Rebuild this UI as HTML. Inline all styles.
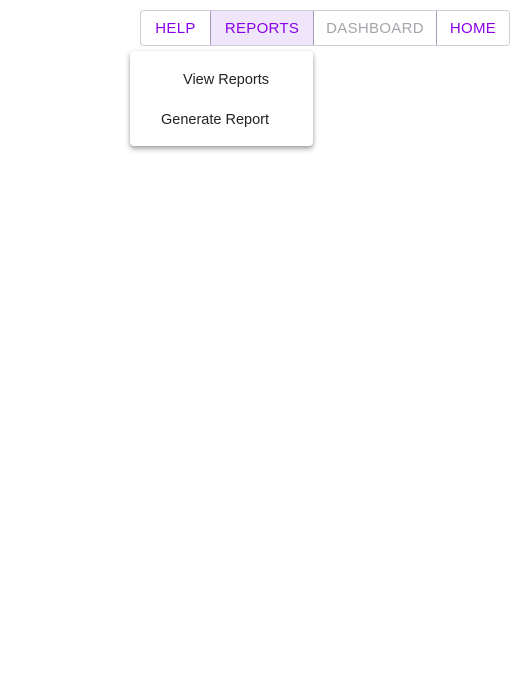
<!DOCTYPE html>
<html><head><style>
body{margin:0;width:520px;height:698px;background:#fff;font-family:"Liberation Sans",Arial,sans-serif;position:relative;overflow:hidden}
.grp{position:absolute;left:140px;top:10px;width:368px;height:34px;border:1px solid #d0cdd6;border-radius:4px;display:flex;overflow:hidden}
.b{height:34px;line-height:36px;text-align:center;font-size:15px;letter-spacing:0.3px;color:#8a00e6;box-sizing:border-box}
.b+.b{border-left:1px solid #a89bb5}
.menu{position:absolute;left:130px;top:51px;width:183px;height:95px;background:#fff;border-radius:4px;box-shadow:0 3px 6px rgba(0,0,0,.3),0 1px 3px rgba(0,0,0,.15)}
.it{position:absolute;right:44px;font-size:14.5px;color:#222}
</style></head><body>
<div class="grp">
<div class="b" style="width:69px">HELP</div>
<div class="b" style="width:103px;background:#efe6fb">REPORTS</div>
<div class="b" style="width:123px;color:#a8a3aa">DASHBOARD</div>
<div class="b" style="width:73px">HOME</div>
</div>
<div class="menu">
<div class="it" style="top:21px">View Reports</div>
<div class="it" style="top:61px">Generate Report</div>
</div>
</body></html>
